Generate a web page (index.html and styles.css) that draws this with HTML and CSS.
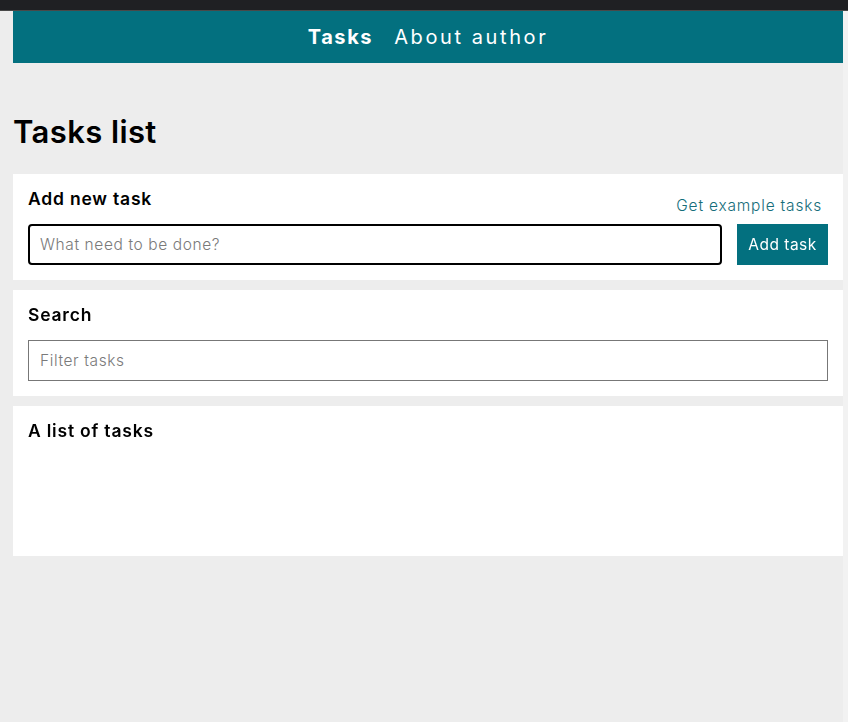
FILE: index.html
```html
<!DOCTYPE html>
<html lang="en">
<head>
<meta charset="utf-8">
<title>Tasks list</title>
<link rel="stylesheet" href="styles.css">
</head>
<body>
<div class="topbar"></div>
<div class="page">
  <div class="main">
    <nav class="nav">
      <a class="nav-link active" href="#">Tasks</a>
      <a class="nav-link" href="#">About author</a>
    </nav>
    <h1 class="page-title">Tasks list</h1>
    <section class="card">
      <div class="card-head">
        <h2 class="card-title">Add new task</h2>
        <a class="link" href="#">Get example tasks</a>
      </div>
      <div class="add-row">
        <input class="task-input" type="text" placeholder="What need to be done?" autofocus>
        <button class="btn">Add task</button>
      </div>
    </section>
    <section class="card">
      <h2 class="card-title">Search</h2>
      <input class="filter-input" type="text" placeholder="Filter tasks">
    </section>
    <section class="card card-list">
      <h2 class="card-title">A list of tasks</h2>
    </section>
  </div>
  <div class="track"></div>
</div>
</body>
</html>
```
FILE: styles.css
```css
* { box-sizing: border-box; }
html, body { margin: 0; padding: 0; }
body {
  background: #ededed;
  font-family: Inter, "Noto Sans", sans-serif;
  color: #000;
  height: 722px;
  overflow: hidden;
}
.topbar {
  height: 11px;
  background: #1f2023;
  border-bottom: 1px solid #494949;
}
.page {
  display: flex;
  height: 711px;
}
.main {
  margin-left: 13px;
  width: 830px;
}
.track {
  flex: 1;
  background: #f2f2f2;
}
.nav {
  height: 52px;
  background: #03707f;
  display: flex;
  justify-content: center;
  align-items: center;
  gap: 21px;
}
.nav-link {
  color: #fff;
  text-decoration: none;
  font-family: Inter, sans-serif;
  font-size: 20px;
  letter-spacing: 2.6px;
}
.nav-link.active { font-weight: 700; letter-spacing: 1.6px; }
.page-title {
  font-size: 31px;
  font-weight: 600;
  line-height: 40px;
  margin: 49px 0 22px;
  letter-spacing: 0.4px;
}
.card {
  background: #fff;
  padding: 13px 15px 15px;
  margin-bottom: 10px;
}
.card-title {
  margin: 0;
  font-size: 17.5px;
  font-weight: 600;
  line-height: 24px;
  letter-spacing: 0.8px;
}
.card-head {
  display: flex;
  justify-content: space-between;
  align-items: flex-end;
  padding-right: 6px;
  height: 28px;
}
.card-head .card-title { align-self: flex-start; }
.link {
  color: #156d7a;
  text-decoration: none;
  font-size: 15.5px;
  font-weight: 300;
  line-height: 20px;
  letter-spacing: 0.8px;
  margin-bottom: -1px;
}
.add-row {
  display: flex;
  gap: 15px;
  margin-top: 9px;
}
.task-input {
  flex: 1;
  height: 41px;
  border: 2px solid #000;
  border-radius: 4px;
  padding: 0 10px;
  font-family: inherit;
  font-size: 15.5px;
  font-weight: 300;
  letter-spacing: 0.6px;
  outline: none;
}
.task-input::placeholder, .filter-input::placeholder { color: #7a7a7a; }
.btn {
  width: 91px;
  height: 41px;
  border: none;
  background: #03707f;
  color: #fff;
  font-family: inherit;
  font-size: 15.5px;
  font-weight: 400;
  letter-spacing: 0.5px;
  padding: 0;
}
.filter-input {
  display: block;
  width: 100%;
  height: 41px;
  margin-top: 13px;
  border: 1px solid #777;
  border-radius: 0;
  padding: 0 11px;
  font-family: inherit;
  font-size: 15.5px;
  font-weight: 300;
  letter-spacing: 0.6px;
  outline: none;
}
.card-list { height: 150px; }
```
